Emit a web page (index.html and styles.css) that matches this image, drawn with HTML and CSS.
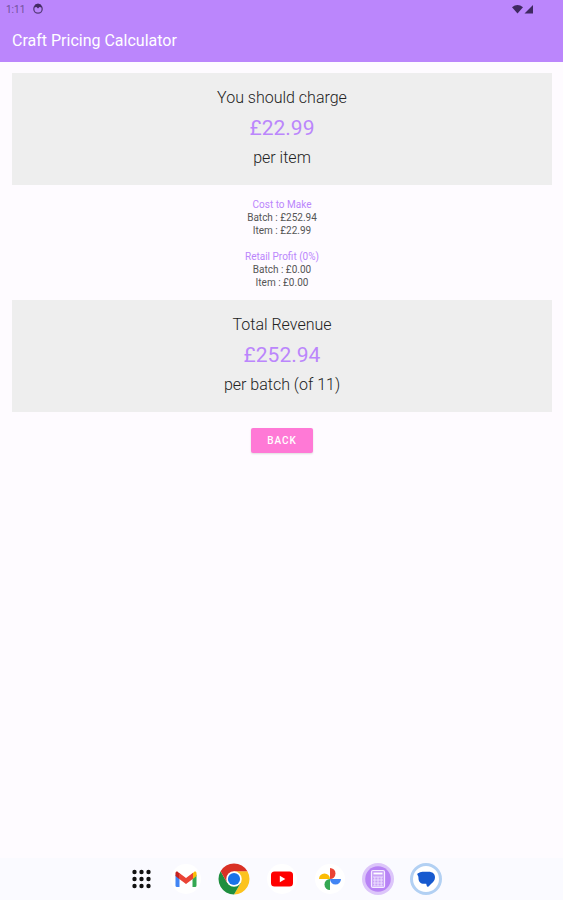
FILE: index.html
```
<!DOCTYPE html>
<html lang="en">
<head>
  <meta charset="UTF-8" />
  <meta name="viewport" content="width=device-width, initial-scale=1" />
  <title>Craft Pricing Calculator</title>
  <link rel="stylesheet" href="styles.css">
</head>
<body>

<header class="app-bar">
  <div class="status-bar">
    <span>1:11</span>
    <svg class="status-icon" viewBox="0 0 12 12">
      <circle cx="6" cy="6" r="4.2" fill="none" stroke="#573c7b" stroke-width="1.3" />
      <path d="M2 4.5 3.2 1.5 6 .5l2.8 1L10 4.5 7.5 4 6 5.5 4.5 4z" fill="#432b63" />
    </svg>
    <svg class="signal-icons" viewBox="0 0 22 10">
      <path d="M0 3.2Q5.5-1.2 11 3.2L5.5 9.5z" fill="#3f2860" />
      <path d="M12.5 9.5 21 1v8.5z" fill="#3f2860" />
    </svg>
  </div>
  <h1>Craft Pricing Calculator</h1>
</header>

<main class="content">
  <section class="card">
    <p>You should charge</p>
    <p class="amount">£22.99</p>
    <p>per item</p>
  </section>

  <section class="details">
    <div class="detail-group">
      <h2>Cost to Make</h2>
      <p>Batch : £252.94</p>
      <p>Item : £22.99</p>
    </div>
    <div class="detail-group">
      <h2>Retail Profit (0%)</h2>
      <p>Batch : £0.00</p>
      <p>Item : £0.00</p>
    </div>
  </section>

  <section class="card">
    <p>Total Revenue</p>
    <p class="amount">£252.94</p>
    <p>per batch (of 11)</p>
  </section>

  <button type="button" class="back-btn">BACK</button>
</main>

<nav class="dock" aria-label="Apps">
  <button type="button" class="dock-item all-apps" aria-label="All apps">
    <svg viewBox="0 0 24 24" fill="#111">
      <circle cx="4.5" cy="5" r="2.2" /><circle cx="11.5" cy="5" r="2.2" /><circle cx="18.500" cy="5" r="2.2" />
      <circle cx="4.5" cy="12" r="2.2" /><circle cx="11.5" cy="12" r="2.2" /><circle cx="18.500" cy="12" r="2.2" />
      <circle cx="4.5" cy="19" r="2.2" /><circle cx="11.5" cy="19" r="2.2" /><circle cx="18.500" cy="19" r="2.2" />
    </svg>
  </button>
  <button type="button" class="dock-item" aria-label="Gmail">
    <svg viewBox="0 0 32 32">
      <circle cx="16" cy="16" r="15" fill="#fff" />
      <path d="M5.5 11.5 9.5 14v10H7a1.5 1.5 0 0 1-1.5-1.5z" fill="#4285f4" />
      <path d="M26.5 11.5 22.5 14v10H25a1.5 1.5 0 0 0 1.5-1.5z" fill="#34a853" />
      <path d="M22.5 10.5 24 9c1.2-1 2.5-.2 2.5 1.2V13l-4 3.2z" fill="#fbbc04" />
      <path d="M5.5 13v-2.8C5.5 8.8 6.8 8 8 9l1.5 1.5v5.7z" fill="#c5221f" />
      <path d="M9 9.7 16 15l7-5.3v6L16 21l-7-5.3z" fill="#ea4335" />
    </svg>
  </button>
  <button type="button" class="dock-item" aria-label="Chrome">
    <svg viewBox="0 0 32 32">
      <path d="M16 8.25H29.42A15.5 15.5 0 0 1 16 31.5L22.7 19.9z" fill="#fcc31e" />
      <path d="M2.58 8.25A15.5 15.5 0 0 0 16 31.5L22.7 19.9 9.3 19.9z" fill="#1e8e3e" />
      <path d="M9.3 19.9 2.58 8.25A15.5 15.5 0 0 1 29.42 8.25H16z" fill="#d93025" />
      <circle cx="16" cy="16" r="7.75" fill="#fff" />
      <circle cx="16" cy="16" r="6.1" fill="#1a73e8" />
    </svg>
  </button>
  <button type="button" class="dock-item" aria-label="YouTube">
    <svg viewBox="0 0 32 32">
      <circle cx="16" cy="16" r="15" fill="#fff" />
      <rect x="5" y="8.5" width="22" height="15" rx="3.5" fill="#f00" />
      <path d="M13.8 12.8v6.4l5.5-3.2z" fill="#fff" />
    </svg>
  </button>
  <button type="button" class="dock-item" aria-label="Photos">
    <svg viewBox="0 0 32 32">
      <circle cx="16" cy="16" r="15" fill="#fff" />
      <path d="M16 16V5a5.5 5.5 0 0 1 0 11z" fill="#ea4335" />
      <path d="M16 16h11a5.5 5.5 0 0 1-11 0z" fill="#4285f4" />
      <path d="M16 16v11a5.5 5.5 0 0 1 0-11z" fill="#34a853" />
      <path d="M16 16H5a5.5 5.5 0 0 1 11 0z" fill="#fbbc04" />
    </svg>
  </button>
  <button type="button" class="dock-item" aria-label="Craft Pricing Calculator">
    <svg viewBox="0 0 32 32">
      <circle cx="16" cy="16" r="16" fill="#dcc5fa" />
      <circle cx="16" cy="16" r="12.8" fill="#b883f5" />
      <rect x="9.5" y="7.5" width="13" height="17" rx="1.5" fill="#c9a2f7" stroke="#f6eeff" stroke-width="1.2" />
      <path d="M11.5 10.5h9" stroke="#fff" stroke-width="1.8" />
      <path d="M11 14h10M11 17h10M11 20h10M11 23h10M12.8 14v9M16 14v9M19.2 14v9" stroke="#efe2ff" stroke-width=".9" />
    </svg>
  </button>
  <button type="button" class="dock-item" aria-label="Messages">
    <svg viewBox="0 0 32 32">
      <circle cx="16" cy="16" r="14.5" fill="#fff" stroke="#b2d0f3" stroke-width="3" />
      <path d="M8.8 10C10.5 9 12 8.800 14 8.800H18.500C22.500 8.800 25 11 25 14.300C25 17 23.500 19 21.500 20.500L18.500 23.500C17.600 24.200 17 23.800 16.800 23L16.200 20.800H14C10.500 20.800 8.500 18.500 8.500 15.500C8.500 13.800 8.300 13 7.500 11.900C6.900 11.100 7.500 10.400 8.800 10z" fill="#1659cf" />
    </svg>
  </button>
</nav>

</body>
</html>
```

FILE: styles.css
```
* {
  box-sizing: border-box;
}
body {
  display: flex;
  flex-direction: column;
  min-height: 100vh;
  margin: 0;
  font-family: Roboto, sans-serif;
  color: #555;
  background: #fefbff;
}
h1, h2, p {
  margin: 0;
  font-weight: 400;
}
svg {
  display: block;
}

/* Header */
.app-bar {
  padding-bottom: 8px;
  background: #bb86fc;
}
.status-bar {
  display: flex;
  align-items: center;
  gap: 7px;
  height: 18px;
  padding: 0 29px 0 6px;
  font-size: 10px;
  color: #70509a;
}
.status-icon {
  width: 12px;
  height: 12px;
}
.signal-icons {
  width: 22px;
  height: 10px;
  margin-left: auto;
}
.app-bar h1 {
  padding: 11px 12px 1px;
  font-size: 16px;
  line-height: 24px;
  color: #fff;
}

/* Pricing results */
.content {
  flex: 1;
  padding: 11px 11px 24px 12px;
  text-align: center;
}
.card {
  padding: 10px 12px 12px;
  font-size: 16px;
  line-height: 30px;
  background: #eee;
}
.card p {
  font-weight: 300;
  color: #222;
}
.card .amount {
  font-size: 21px;
  font-weight: 400;
  color: #bb86fc;
}
.details {
  display: grid;
  gap: 13px;
  padding: 13px 0 11px;
  font-size: 10px;
  line-height: 13px;
}
.detail-group h2 {
  font-size: 10px;
  color: #bb86fc;
}
.back-btn {
  height: 25px;
  margin-top: 16px;
  padding: 0 16px;
  border: 0;
  border-radius: 2px;
  font-family: inherit;
  font-size: 10px;
  font-weight: 500;
  letter-spacing: 1px;
  color: #fff;
  background: #ff79d6;
  box-shadow: 0 1px 2px #ddd;
}

/* App dock */
.dock {
  display: flex;
  align-items: center;
  justify-content: center;
  gap: 16px;
  height: 42px;
  padding-left: 8px;
  background: #fafaff;
}
.dock-item {
  width: 32px;
  height: 32px;
  padding: 0;
  border: 0;
  background: none;
}
.all-apps {
  width: 24px;
  height: 24px;
}
```
